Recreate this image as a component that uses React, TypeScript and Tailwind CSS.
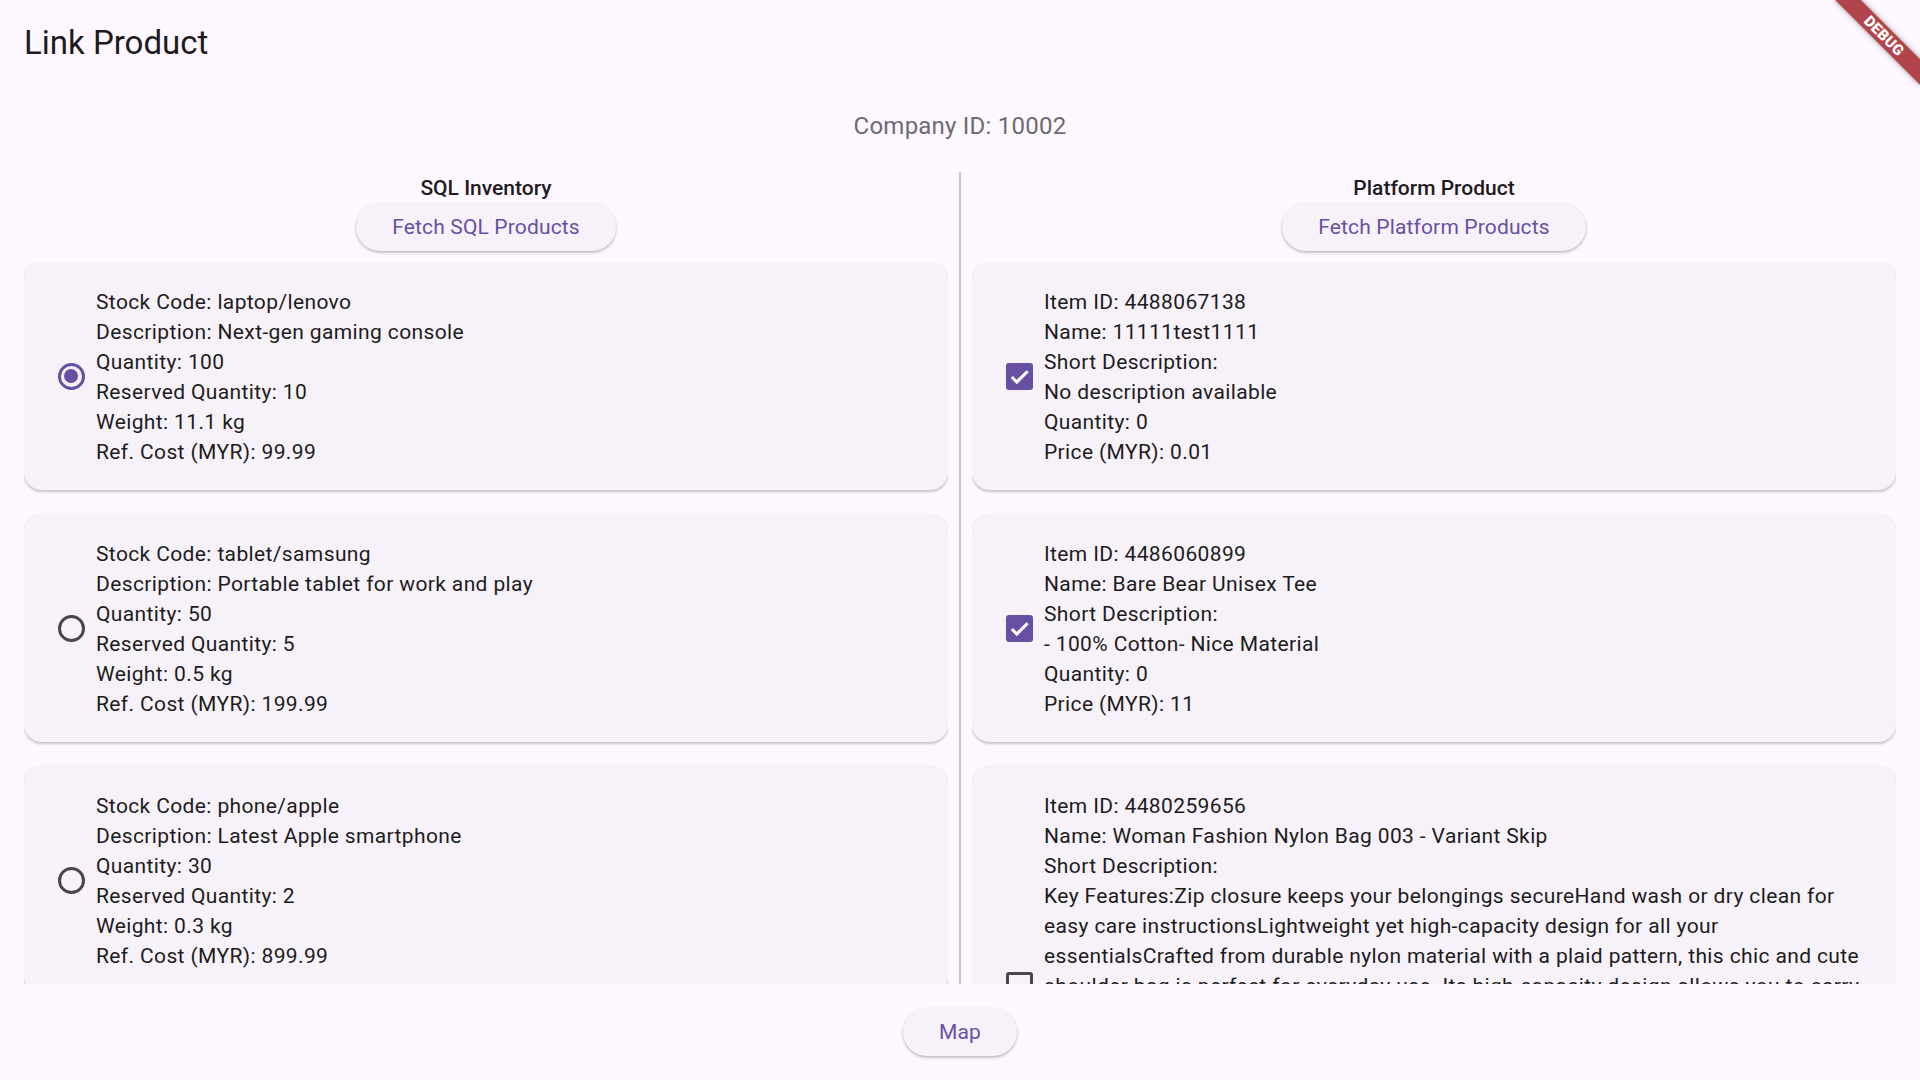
import React from "react";

type SqlItem = {
  code: string;
  desc: string;
  qty: number;
  reserved: number;
  weight: string;
  cost: string;
  selected: boolean;
};

type PlatformItem = {
  id: string;
  name: string;
  desc: string;
  qty: number;
  price: string;
  checked: boolean;
};

const sqlItems: SqlItem[] = [
  { code: "laptop/lenovo", desc: "Next-gen gaming console", qty: 100, reserved: 10, weight: "11.1", cost: "99.99", selected: true },
  { code: "tablet/samsung", desc: "Portable tablet for work and play", qty: 50, reserved: 5, weight: "0.5", cost: "199.99", selected: false },
  { code: "phone/apple", desc: "Latest Apple smartphone", qty: 30, reserved: 2, weight: "0.3", cost: "899.99", selected: false },
  { code: "watch/garmin", desc: "Smart fitness watch", qty: 20, reserved: 1, weight: "0.1", cost: "499.99", selected: false },
];

const platformItems: PlatformItem[] = [
  { id: "4488067138", name: "11111test1111", desc: "No description available", qty: 0, price: "0.01", checked: true },
  { id: "4486060899", name: "Bare Bear Unisex Tee", desc: "- 100% Cotton- Nice Material", qty: 0, price: "11", checked: true },
  {
    id: "4480259656",
    name: "Woman Fashion Nylon Bag 003 - Variant Skip",
    desc:
      "Key Features:Zip closure keeps your belongings secureHand wash or dry clean for easy care instructionsLightweight yet high-capacity design for all your essentialsCrafted from durable nylon material with a plaid pattern, this chic and cute shoulder bag is perfect for everyday use. Its high-capacity design allows you to carry all your essentials with ease, from your phone and wallet to your makeup and keys. The secure zip closure keeps your belongings safe, while the lightweight nylon construction makes it comfortable to carry all day long. Easy to care for, simply hand wash or dry clean to keep it looking fresh.",
    qty: 0,
    price: "25",
    checked: false,
  },
];

function Radio({ selected }: { selected: boolean }) {
  return selected ? (
    <div className="w-[27px] h-[27px] rounded-full border-[3px] border-[#6750A4] flex items-center justify-center">
      <div className="w-[14px] h-[14px] rounded-full bg-[#6750A4]" />
    </div>
  ) : (
    <div className="w-[27px] h-[27px] rounded-full border-[3px] border-[#49454F]" />
  );
}

function Checkbox({ checked }: { checked: boolean }) {
  return checked ? (
    <div className="w-[27px] h-[27px] rounded-[3px] bg-[#6750A4] flex items-center justify-center">
      <svg width="23" height="23" viewBox="0 0 24 24" fill="none">
        <path d="M4 12.5l5.2 5.2L20.5 6.5" stroke="white" strokeWidth="3.2" strokeLinecap="butt" strokeLinejoin="miter" />
      </svg>
    </div>
  ) : (
    <div className="w-[27px] h-[27px] rounded-[3px] border-[3px] border-[#49454F]" />
  );
}

function Card({ leading, children }: { leading: React.ReactNode; children: React.ReactNode }) {
  return (
    <div className="mb-[24px] rounded-[18px] bg-[#F7F2FA] shadow-[0_1.5px_2.5px_rgba(0,0,0,0.22)] flex items-center pl-[24px]">
      <div className="w-[46px] shrink-0 flex justify-center">{leading}</div>
      <div className="ml-[2px] flex-1 pt-[25px] pb-[23px] pr-[24px] text-[21px] leading-[30px] tracking-[0.375px] text-[#1D1B20]">
        {children}
      </div>
    </div>
  );
}

function PillButton({ label }: { label: string }) {
  return (
    <button className="h-[48px] px-[36px] rounded-full bg-[#F7F2FA] shadow-[0_1.5px_3px_rgba(0,0,0,0.28)] text-[#6750A4] text-[21px] font-normal tracking-[0.15px] leading-none">
      {label}
    </button>
  );
}

export default function App() {
  return (
    <div className="relative w-[1920px] h-[1080px] overflow-hidden bg-[#FEF7FF] flex flex-col font-['Roboto',sans-serif] text-[#1D1B20]">
      <div className="h-[84px] shrink-0 flex items-center px-[24px] text-[33px] leading-none">Link Product</div>

      <div className="flex-1 min-h-0 flex flex-col p-[24px]">
        <div className="text-center text-[24px] leading-[36px] text-[#6f6a72] tracking-[0.225px]">Company ID: 10002</div>

        <div className="mt-[28px] flex-1 min-h-0 flex">
          <div className="flex-1 min-w-0 flex flex-col">
            <div className="pt-[1px] text-center text-[21px] leading-[30px] font-medium">SQL Inventory</div>
            <div className="flex justify-center">
              <PillButton label="Fetch SQL Products" />
            </div>
            <div className="mt-[11px] flex-1 min-h-0 overflow-hidden">
              {sqlItems.map((s) => (
                <Card key={s.code} leading={<Radio selected={s.selected} />}>
                  <div>Stock Code: {s.code}</div>
                  <div>Description: {s.desc}</div>
                  <div>Quantity: {s.qty}</div>
                  <div>Reserved Quantity: {s.reserved}</div>
                  <div>Weight: {s.weight} kg</div>
                  <div>Ref. Cost (MYR): {s.cost}</div>
                </Card>
              ))}
            </div>
          </div>

          <div className="w-[24px] shrink-0 flex justify-center">
            <div className="w-[1.5px] h-full bg-[#CAC4D0]" />
          </div>

          <div className="flex-1 min-w-0 flex flex-col">
            <div className="pt-[1px] text-center text-[21px] leading-[30px] font-medium">Platform Product</div>
            <div className="flex justify-center">
              <PillButton label="Fetch Platform Products" />
            </div>
            <div className="mt-[11px] flex-1 min-h-0 overflow-hidden">
              {platformItems.map((p) => (
                <Card key={p.id} leading={<Checkbox checked={p.checked} />}>
                  <div>Item ID: {p.id}</div>
                  <div>Name: {p.name}</div>
                  <div>Short Description:</div>
                  <div>{p.desc}</div>
                  <div>Quantity: {p.qty}</div>
                  <div>Price (MYR): {p.price}</div>
                </Card>
              ))}
            </div>
          </div>
        </div>

        <div className="mt-[24px] flex justify-center">
          <PillButton label="Map" />
        </div>
      </div>

      <div className="absolute left-[1824px] top-[27px] w-[120px] h-[18px] rotate-45 bg-[#b3454a] shadow-[0_0_5px_rgba(0,0,0,0.45)] flex items-center justify-center">
        <span className="text-white text-[15px] font-black leading-none tracking-[0.3px]">DEBUG</span>
      </div>
    </div>
  );
}
